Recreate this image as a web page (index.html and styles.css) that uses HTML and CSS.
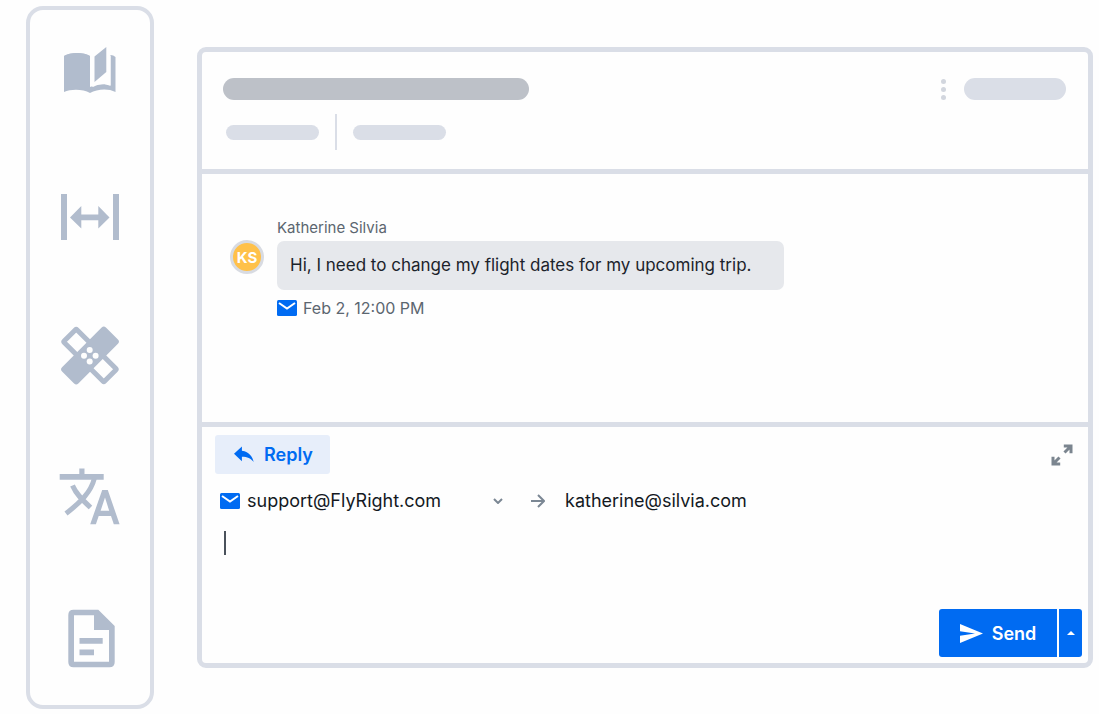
FILE: index.html
```html
<!DOCTYPE html>
<html lang="en">
<head>
<meta charset="utf-8">
<meta name="viewport" content="width=device-width, initial-scale=1">
<title>Reply to Katherine Silvia</title>
<link rel="stylesheet" href="styles.css">
</head>
<body>
<div class="app">
  <nav class="rail" aria-label="Tools">
    <button class="tool" type="button" aria-label="Read">
      <svg viewBox="0 0 70 70"><path d="M9 20C15 16 29 16 35 20V51C41 48 50 47 55.500 50V19Q58.500 19 60.500 21V56C53 52 42 53 35 57C28 53 16 53 9 56Z"/><path class="cut" d="M35 20H55.500V49C50 47 43 48 38 51L35 49Z"/><path d="M9 20C15 16 29 16 35 20V52H9ZM39.500 20.500L51.300 11V36L39.500 46Z"/></svg>
    </button>
    <button class="tool" type="button" aria-label="Expand text">
      <svg viewBox="0 0 70 70"><path d="M6 16h6v46H6zM58 16h6v46h-6zM15 39.500L26.300 28v8.500h17V28L54.500 39.500L43.300 50.500V42.200h-17v8.300z"/></svg>
    </button>
    <button class="tool" type="button" aria-label="Fix">
      <svg viewBox="0 0 70 70">
        <rect class="outline" x="6.500" y="26.500" width="57" height="18" rx="1" transform="rotate(45 35 35.500)"/>
        <rect x="4" y="24" width="62" height="23" rx="3" transform="rotate(-45 35 35.500)"/>
        <g class="dots"><circle cx="34.700" cy="30" r="3"/><circle cx="29" cy="35.700" r="3"/><circle cx="40.600" cy="35.700" r="3"/><circle cx="34.700" cy="41.400" r="3"/></g>
      </svg>
    </button>
    <button class="tool" type="button" aria-label="Translate">
      <svg viewBox="0 0 70 70">
        <path d="M4.700 13h19.600V7.500h5.200V13h19.200v5.700H4.700z"/>
        <path class="outline" d="M39.500 17C36 31 26 41 11 52.500M17.500 24.500C21 33 28 39.500 35.500 46.500"/>
        <path fill-rule="evenodd" d="M47.200 29h5.600L64.600 63.300h-5.800L56 55H43.700l-2.800 8.300h-5.700zM50 36.500L45.600 49.800h8.600z"/>
      </svg>
    </button>
    <button class="tool" type="button" aria-label="Summarize">
      <svg viewBox="0 0 70 70"><path fill-rule="evenodd" d="M18.500 6.700H43.300L59.700 23V59Q59.700 64.300 54.500 64.300H18.500Q13.300 64.300 13.300 59V12Q13.300 6.700 18.500 6.700zM19 12.200V58.800H54V27H39V12.200zM24.500 35H47.700V40.800H24.500zM24.500 46.500H39V52.300H24.500z"/></svg>
    </button>
  </nav>

  <main class="panel">
    <header class="head">
      <div class="head-row">
        <span class="bar bar-title"></span>
        <div class="head-side">
          <button class="more" type="button" aria-label="More"><i></i><i></i><i></i></button>
          <span class="bar bar-action"></span>
        </div>
      </div>
      <div class="meta-row">
        <span class="bar bar-meta"></span>
        <span class="rule"></span>
        <span class="bar bar-meta"></span>
      </div>
    </header>

    <section class="thread">
      <article class="message">
        <span class="avatar">KS</span>
        <div class="message-main">
          <div class="name">Katherine Silvia</div>
          <p class="bubble">Hi, I need to change my flight dates for my upcoming trip.</p>
          <div class="stamp">
            <svg class="mail" viewBox="0 0 20 16"><rect width="20" height="16" rx="1.500"/><path d="M2 3l8 5.600L18 3"/></svg>
            <time>Feb 2, 12:00 PM</time>
          </div>
        </div>
      </article>
    </section>

    <form class="composer">
      <div class="composer-top">
        <button class="reply" type="button">
          <svg class="reply-icon" viewBox="0 0 21 17"><path d="M8.300 4.500V0L0 7.800l8.300 7.700v-4.600c5.700 0 9.500 1.700 12.400 5.600C19.500 11 16.200 5.600 8.300 4.500z"/></svg>
          Reply
        </button>
        <button class="icon-button" type="button" aria-label="Expand composer">
          <svg class="expand" viewBox="0 0 22 22"><path d="M12.800 2h7.200v7.200M20 2l-6.500 6.500M9.200 20H2v-7.200M2 20l6.500-6.500"/></svg>
        </button>
      </div>
      <div class="address-row">
        <svg class="mail" viewBox="0 0 20 16"><rect width="20" height="16" rx="1.500"/><path d="M2 3l8 5.600L18 3"/></svg>
        <select class="from" aria-label="From"><option>support@FlyRight.com</option></select>
        <svg class="chevron" viewBox="0 0 10 6"><path d="M1 1l4 4 4-4"/></svg>
        <svg class="arrow" viewBox="0 0 14 14"><path d="M0 7h13M7 1l6 6-6 6"/></svg>
        <input class="to" type="email" aria-label="To" value="katherine@silvia.com">
      </div>
      <div class="editor">
        <span class="caret"></span>
        <textarea class="draft" aria-label="Message"></textarea>
      </div>
      <div class="actions">
        <button class="send" type="button">
          <svg class="send-icon" viewBox="0 0 23 19"><path d="M0 0l23 9.500L0 19v-7.200L15 9.500 0 7.200z"/></svg>
          Send
        </button>
        <button class="send-more" type="button" aria-label="Send options">
          <svg class="caret-up" viewBox="0 0 8 4"><path d="M0 4l4-4 4 4z"/></svg>
        </button>
      </div>
    </form>
  </main>
</div>
</body>
</html>
```
FILE: styles.css
```css
* { box-sizing: border-box; }

body {
  margin: 0;
  background: #fefefe;
  color: #1c232b;
  font-family: Inter, "Liberation Sans", sans-serif;
}

button, input, select, textarea {
  margin: 0;
  padding: 0;
  border: 0;
  background: none;
  color: inherit;
  font: inherit;
  outline: 0;
}

svg { display: block; flex: none; }

.app {
  display: flex;
  gap: 43px;
  min-height: 100vh;
  padding: 6px 6px 5px 26px;
}

/* Tool rail */
.rail {
  display: flex;
  flex: none;
  flex-direction: column;
  align-items: center;
  justify-content: space-between;
  width: 128px;
  padding: 26px 0 32px;
  border: 4px solid #dadee7;
  border-radius: 17px;
}

.tool svg { width: 70px; height: 70px; fill: #b1bccd; }
.tool .outline { fill: none; stroke: #b1bccd; stroke-width: 5px; }
.tool .dots, .tool .cut { fill: #fefefe; }

/* Conversation panel */
.panel {
  display: flex;
  flex: 1;
  flex-direction: column;
  min-width: 0;
  margin: 41px 0;
  border: 5px solid #dadee7;
  border-radius: 9px;
}

.head {
  padding: 26px 22px 19px 21px;
  border-bottom: 5px solid #dadee7;
}

.head-row, .head-side, .meta-row { display: flex; align-items: center; }
.head-row { justify-content: space-between; }
.head-side { gap: 18px; }

.bar { height: 22px; border-radius: 11px; background: #dadee7; }
.bar-title { width: 306px; background: #bdc1c8; }
.bar-action { width: 102px; }
.bar-meta { width: 93px; height: 15px; }

.more { display: flex; flex-direction: column; gap: 3px; }
.more i { width: 5px; height: 5px; border-radius: 50%; background: #d2d6de; }

.meta-row { gap: 16px; margin-top: 14px; padding-left: 3px; }
.rule { width: 2px; height: 36px; background: #dadee7; }

.thread {
  padding: 44px 28px 104px;
  border-bottom: 5px solid #dadee7;
}

.message { display: flex; gap: 13px; }

.avatar {
  display: grid;
  place-items: center;
  width: 34px;
  height: 34px;
  margin-top: 22px;
  border: 3px solid #d8dbe2;
  border-radius: 50%;
  background: #ffc14a;
  color: #fff;
  font-size: 15px;
  font-weight: 700;
}

.name { color: #5c6670; font-size: 15px; line-height: 20px; }

.bubble {
  margin: 3px 0 8px;
  padding: 12px 33px 13px 13px;
  border-radius: 7px;
  background: #e6e8ec;
  font-size: 17px;
  line-height: 24px;
}

.stamp {
  display: flex;
  align-items: center;
  gap: 6px;
  color: #5c6670;
  font-size: 16px;
  line-height: 20px;
}

.mail { width: 20px; height: 16px; fill: #006bf2; }
.mail path { fill: none; stroke: #fff; stroke-width: 2px; }

/* Composer */
.composer {
  display: flex;
  flex: 1;
  flex-direction: column;
  padding: 8px 6px 6px 13px;
}

.composer-top { display: flex; align-items: center; justify-content: space-between; }

.reply {
  display: flex;
  align-items: center;
  gap: 10px;
  height: 39px;
  padding: 0 17px 0 19px;
  border-radius: 3px;
  background: #e7eefa;
  color: #006bf2;
  font-size: 18px;
  font-weight: 600;
}

.reply-icon { width: 20px; height: 17px; fill: currentColor; }
.icon-button { margin-right: 9px; }
.expand { width: 22px; height: 22px; fill: none; stroke: #7b858f; stroke-width: 3px; }

.address-row {
  display: flex;
  align-items: center;
  margin-top: 15px;
  padding-left: 5px;
  color: #14191f;
  font-size: 18px;
  line-height: 24px;
}

.from { width: 246px; height: 24px; margin-left: 7px; appearance: none; }
.chevron { width: 10px; height: 6px; fill: none; stroke: #7b8794; stroke-width: 2px; }
.arrow { width: 14px; height: 14px; margin: 0 20px 0 28px; fill: none; stroke: #7b8794; stroke-width: 2px; }
.to { flex: 1; min-width: 0; height: 24px; }

.editor { display: flex; flex: 1; gap: 4px; margin-top: 18px; padding-left: 9px; }
.caret { width: 2px; height: 24px; background: #4a525b; }
.draft { flex: 1; height: 24px; font-size: 18px; line-height: 24px; resize: none; }

.actions { display: flex; justify-content: flex-end; gap: 2px; }

.send, .send-more {
  display: flex;
  align-items: center;
  justify-content: center;
  height: 48px;
  background: #006bf2;
  color: #fff;
}

.send {
  gap: 9px;
  width: 118px;
  border-radius: 3px 0 0 3px;
  font-size: 18px;
  font-weight: 600;
}

.send-icon { width: 23px; height: 19px; fill: currentColor; }
.send-more { width: 23px; border-radius: 0 3px 3px 0; }
.caret-up { width: 8px; height: 4px; fill: currentColor; }
```
